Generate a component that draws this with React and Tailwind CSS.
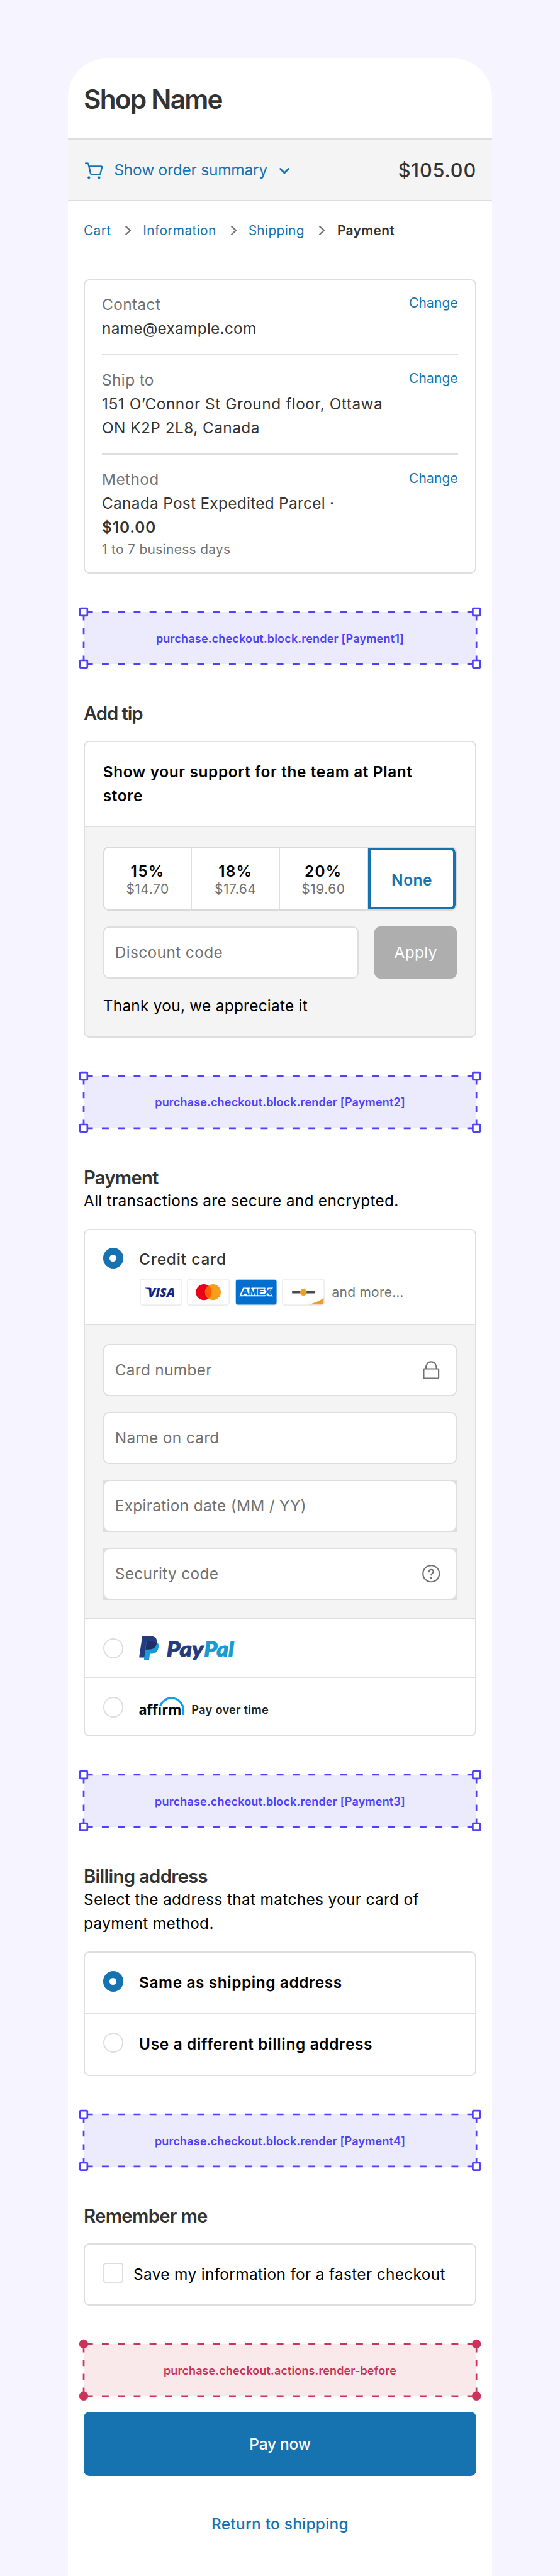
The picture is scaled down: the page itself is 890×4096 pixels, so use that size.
import React from "react";

const cx = (...names) => names.filter(Boolean).join(" ");

/* ---------- shared pieces ---------- */

function Body({ className, children }) {
  return <p className={cx("text-[24.4px] leading-[38px] whitespace-nowrap", className)}>{children}</p>;
}

function Heading({ className, children }) {
  return (
    <h2 className={cx("text-[29.3px] leading-[34px] font-semibold text-[#333] whitespace-nowrap", className)}>
      {children}
    </h2>
  );
}

function Card({ className, children }) {
  return (
    <div className={cx("overflow-hidden rounded-[9px] border-2 border-[#dedede] bg-white", className)}>
      {children}
    </div>
  );
}

function Radio({ checked, className }) {
  return checked ? (
    <span className={cx("flex size-[32.4px] shrink-0 items-center justify-center rounded-full bg-[#1773b0]", className)}>
      <span className="size-[10.8px] rounded-full bg-white" />
    </span>
  ) : (
    <span className={cx("size-[32.4px] shrink-0 rounded-full border-2 border-[#dedede] bg-white", className)} />
  );
}

function ExtensionTarget({ label, tone = "block", className, tracking }) {
  const red = tone === "action";
  const color = red ? "#cc3359" : "#4f40fa";
  const corners = [
    [8, 8],
    [632.2, 8],
    [8, 90.8],
    [632.2, 90.8],
  ];
  return (
    <div
      className={cx(
        "relative flex h-[82.8px] items-center justify-center text-[18px] font-semibold whitespace-nowrap",
        red ? "bg-[#fae9eb] text-[#cc3359]" : "bg-[#ecebfe] text-[#4f40fa]",
        className
      )}
    >
      <svg
        className="absolute -top-[8px] -left-[8px] h-[98.8px] w-[640.2px]"
        viewBox="0 0 640.2 98.8"
        fill="none"
        stroke={color}
        strokeWidth="2.7"
      >
        <g strokeDasharray="10.9 14.35">
          <path d="M11.7 8H629" />
          <path d="M11.7 90.8H629" />
        </g>
        <g strokeDasharray="9.4 12.4">
          <path d="M8 12V87" />
          <path d="M632.2 12V87" />
        </g>
        {corners.map(([x, y]) =>
          red ? (
            <circle key={`${x}-${y}`} cx={x} cy={y} r="7.2" fill={color} stroke="none" />
          ) : (
            <rect key={`${x}-${y}`} x={x - 5.8} y={y - 5.8} width="11.6" height="11.6" rx="0.8" fill="#fff" />
          )
        )}
      </svg>
      <span className={cx("pt-[2px]", tracking)}>{label}</span>
    </div>
  );
}

/* ---------- icons ---------- */

function CartIcon() {
  return (
    <svg className="mt-[2px] ml-[2px] h-[26.4px] w-[28.4px]" viewBox="45 90 142 132" fill="none">
      <path
        d="M51 97.500H64Q70 97.500 72 105L77 122L90 179Q92 187 99 187H159Q166 187 168 180L180 130Q181 122 174 122H78"
        stroke="#1773b0"
        strokeWidth="12"
        strokeLinecap="round"
        strokeLinejoin="round"
      />
      <circle cx="76.500" cy="211" r="10" fill="#1773b0" />
      <circle cx="157" cy="211" r="10" fill="#1773b0" />
    </svg>
  );
}

function CrumbChevron({ className }) {
  return (
    <svg className={cx("mr-[18.500px] ml-[23px] h-[14.800px] w-[9.500px]", className)} viewBox="0 0 9.5 14.8" fill="none">
      <path d="M1.300 1.300L8 7.400L1.300 13.500" stroke="#717171" strokeWidth="2.300" strokeLinecap="round" strokeLinejoin="round" />
    </svg>
  );
}

function LockIcon() {
  return (
    <svg className="size-[28.500px]" viewBox="0 0 28.5 28.5" fill="none" stroke="#717171" strokeWidth="2.200">
      <rect x="2.400" y="12.500" width="23.700" height="15" rx="1" />
      <path d="M5.700 12.500C5.700 5.600 9 1.300 14.250 1.300S22.800 5.600 22.800 12.500" />
    </svg>
  );
}

function HelpIcon() {
  return (
    <svg className="size-[28.500px]" viewBox="0 0 28.5 28.5" fill="none" stroke="#717171" strokeWidth="2.200">
      <circle cx="14.250" cy="14.250" r="13" />
      <path d="M10.800 11.200C10.800 9.100 12.200 7.800 14.300 7.800S17.800 9.100 17.800 11C17.800 13.500 14.300 13.600 14.300 16.300" strokeLinecap="round" />
      <circle cx="14.250" cy="20.700" r="1.700" fill="#717171" stroke="none" />
    </svg>
  );
}

function BrandCard({ children }) {
  return (
    <svg className="h-[43.100px] w-[68.200px]" viewBox="0 0 341 215">
      <rect x="4.500" y="4.500" width="332" height="206" rx="22" fill="#fff" stroke="#ededed" strokeWidth="9" />
      {children}
    </svg>
  );
}

function VisaMark() {
  return (
    <BrandCard>
      <path d="M45 72H82L92 110Q80 82 45 76Z" fill="#142688" />
      <text x="66" y="144" fontFamily="Open Sans" fontWeight="800" fontStyle="italic" fontSize="101" fill="#142688" textLength="214" lengthAdjust="spacingAndGlyphs">
        VISA
      </text>
    </BrandCard>
  );
}

function MastercardMark() {
  return (
    <BrandCard>
      <circle cx="135" cy="108" r="63" fill="#eb001b" />
      <circle cx="207" cy="108" r="63" fill="#f79e1b" />
      <path d="M171 56.300A63 63 0 0 1 171 159.700A63 63 0 0 1 171 56.300Z" fill="#ff5f00" />
    </BrandCard>
  );
}

function AmexMark() {
  return (
    <BrandCard>
      <rect x="9" y="9" width="324" height="198" rx="17" fill="#006fcf" />
      <path
        d="M66 72H121L127 86L133 72H242L253 83L264 72H306L273 105L306 141H265L253 130L242 141H82L77 132L73 141H36Z"
        fill="#fff"
      />
      <text x="53" y="130" fontFamily="Liberation Sans" fontWeight="700" fontSize="71" fill="#006fcf" stroke="#006fcf" strokeWidth="3" textLength="236" lengthAdjust="spacingAndGlyphs">
        AMEX
      </text>
    </BrandCard>
  );
}

function DiscoverMark() {
  return (
    <BrandCard>
      <path d="M81 108H261" stroke="#4a4a4a" strokeWidth="18" />
      <circle cx="171" cy="108" r="27" fill="#ee9f27" />
      <path d="M212 206Q285 190 332 152V189Q332 206 315 206Z" fill="#ee9f27" />
    </BrandCard>
  );
}

function PayPalLogo() {
  return (
    <svg className="h-[39.200px] w-[151.400px] overflow-visible" viewBox="41 56 757 196" role="img" aria-label="PayPal">
      <path d="M66 63Q67 58 72 58H135Q183 60 183 100Q180 160 118 165L90 229H46Q41 229 42 224Z" fill="#253b80" />
      <path d="M104 101H150Q176 101 186 110Q199 121 197 143Q190 197 140 198H132Q127 198 126 203L121 246Q120 251 116 251H83Q80 251 80 247L99 107Q100 101 104 101Z" fill="#179bd7" />
      <path d="M105 101H150Q172 101 182 107Q178 164 118 165H98Q94 165 92 169L100 106Q100 101 105 101Z" fill="#222d65" />
      <g fontFamily="Lato" fontWeight="900" fontStyle="italic" fontSize="166" strokeWidth="5">
        <text x="260" y="221" fill="#253b80" stroke="#253b80" textLength="293" lengthAdjust="spacingAndGlyphs">
          Pay
        </text>
        <text x="557" y="221" fill="#179bd7" stroke="#179bd7" textLength="238" lengthAdjust="spacingAndGlyphs">
          Pal
        </text>
      </g>
    </svg>
  );
}

function AffirmLogo() {
  return (
    <svg className="h-[29.600px] w-[72.600px] overflow-visible" viewBox="41 539 363 148" role="img" aria-label="affirm">
      <text x="38" y="684" fontFamily="Open Sans" fontWeight="700" fontSize="113" fill="#060809" textLength="341" lengthAdjust="spacingAndGlyphs">
        affırm
      </text>
      <path d="M209 612C225 572 260 548 298 548C352 548 394 594 394 650Q394 668 391 684" fill="none" stroke="#0fa0ea" strokeWidth="16" />
    </svg>
  );
}

/* ---------- sections ---------- */

function ReviewRow({ label, last, children }) {
  return (
    <div className={cx("flex items-start justify-between pt-[20px]", !last && "border-b-2 border-[#dedede] pb-[22.400px]")}>
      <div>
        <Body className="tracking-[0.016em] text-[#717171]">{label}</Body>
        {children}
      </div>
      <a className="pt-[2.200px] text-[20.900px] leading-[30px] tracking-[0.011em] text-[#1773b0]">Change</a>
    </div>
  );
}

function Review() {
  return (
    <Card className="mt-[62.500px] h-[467.600px] px-[27px] text-[#333]">
      <div className="-mt-[1.600px]">
        <ReviewRow label="Contact">
          <Body className="tracking-[0.011em]">name@example.com</Body>
        </ReviewRow>
        <ReviewRow label="Ship to">
          <Body className="tracking-[0.022em]">151 O’Connor St Ground floor, Ottawa</Body>
          <Body className="tracking-[0.018em]">ON K2P 2L8, Canada</Body>
        </ReviewRow>
        <ReviewRow label="Method" last>
          <Body className="tracking-[0.012em]">Canada Post Expedited Parcel ·</Body>
          <Body className="font-semibold tracking-[0.037em]">$10.00</Body>
          <p className="mt-[1.400px] text-[20.900px] leading-[30px] tracking-[0.016em] text-[#717171]">1 to 7 business days</p>
        </ReviewRow>
      </div>
    </Card>
  );
}

const tips = [
  ["15%", "$14.70"],
  ["18%", "$17.64"],
  ["20%", "$19.60"],
];

function Tip() {
  return (
    <Card className="mt-[26.200px] flex h-[471.200px] flex-col">
      <div className="h-[134.800px] shrink-0 border-b-2 border-[#dedede] px-[28.700px] pt-[27.300px]">
        <Body className="font-semibold tracking-[0.026em] text-black">Show your support for the team at Plant</Body>
        <Body className="font-semibold tracking-[0.026em] text-black">store</Body>
      </div>
      <div className="grow bg-[#f4f4f4] px-[28.700px] pt-[30.600px]">
        <div className="grid h-[101.900px] grid-cols-4 overflow-hidden rounded-[9px] border-2 border-[#dadada] bg-white text-center">
          {tips.map(([percent, amount]) => (
            <div key={percent} className="border-r-2 border-[#dedede] pt-[21px]">
              <p className="text-[24.400px] leading-[32px] font-semibold tracking-[0.050em] text-black">{percent}</p>
              <p className="text-[20.900px] leading-[26px] tracking-[0.025em] text-[#717171]">{amount}</p>
            </div>
          ))}
          <div className="flex items-center justify-center rounded-r-[7px] border-4 border-[#1773b0] pt-[6px] text-[24.400px] font-semibold tracking-[0.021em] text-[#1773b0]">
            None
          </div>
        </div>
        <div className="mt-[25.400px] flex h-[82.800px] gap-[25px]">
          <div className="flex grow items-center rounded-[9px] border-2 border-[#dedede] bg-white pl-[17px]">
            <Body className="tracking-[0.016em] text-[#717171]">Discount code</Body>
          </div>
          <div className="flex w-[131.300px] items-center justify-center rounded-[9px] bg-[#aeaeae]">
            <Body className="tracking-[0.016em] text-white">Apply</Body>
          </div>
        </div>
        <Body className="mt-[24.400px] tracking-[0.011em] text-black">Thank you, we appreciate it</Body>
      </div>
    </Card>
  );
}

function Field({ label, icon, square }) {
  const content = (
    <>
      <Body className="tracking-[0.013em] text-[#717171]">{label}</Body>
      {icon}
    </>
  );
  if (square) {
    return (
      <div className="h-[83px] bg-[#dedede] p-[2px]">
        <div className="flex h-full items-center justify-between rounded-[8px] bg-white pr-[25px] pl-[17px]">{content}</div>
      </div>
    );
  }
  return (
    <div className="flex h-[83px] items-center justify-between rounded-[9px] border-2 border-[#dedede] bg-white pr-[25px] pl-[17px]">
      {content}
    </div>
  );
}

function PaymentMethods() {
  return (
    <Card className="mt-[26.100px] h-[807.700px]">
      <div className="flex h-[151px] gap-[25px] border-b-2 border-[#dedede] px-[28.700px] pt-[27.500px]">
        <Radio checked className="mt-px" />
        <div>
          <Body className="font-medium tracking-[0.035em] text-[#333]">Credit card</Body>
          <div className="mt-[11.500px] ml-[0.500px] flex items-center gap-[7.300px]">
            <VisaMark />
            <MastercardMark />
            <AmexMark />
            <DiscoverMark />
            <span className="ml-[4px] text-[20.900px] tracking-[0.015em] whitespace-nowrap text-[#717171]">and more…</span>
          </div>
        </div>
      </div>
      <div className="flex h-[467.500px] flex-col gap-[25px] border-b-2 border-[#dedede] bg-[#f4f4f4] px-[28.700px] pt-[30.200px]">
        <Field label="Card number" icon={<LockIcon />} />
        <Field label="Name on card" />
        <Field label="Expiration date (MM / YY)" square />
        <Field label="Security code" square icon={<HelpIcon />} />
      </div>
      <div className="flex h-[93.500px] items-center gap-[25px] border-b-2 border-[#dedede] px-[28.700px] pt-[2px]">
        <Radio />
        <PayPalLogo />
      </div>
      <div className="flex h-[91.900px] items-center px-[28.700px] pt-[2px]">
        <Radio />
        <div className="mb-[3px] ml-[25px] flex items-end">
          <AffirmLogo />
          <span className="ml-[10.500px] text-[18.300px] leading-[19px] font-semibold tracking-[0.014em] whitespace-nowrap text-[#202223]">Pay over time</span>
        </div>
      </div>
    </Card>
  );
}

export default function App() {
  return (
    <div className="h-[4096px] w-[890px] overflow-hidden bg-[#f6f4ff] pt-[93.400px] font-[Inter,sans-serif]">
      <main className="ml-[108px] h-[4002.600px] w-[674px] overflow-hidden rounded-t-[61px] bg-white">
        <header className="h-[126.200px] px-[25px] pt-[40px]">
          <h1 className="text-[42.300px] leading-[50px] font-semibold tracking-[-0.042em] text-[#333]">Shop Name</h1>
        </header>

        <div className="flex h-[100.700px] items-center justify-between border-y-2 border-[#dedede] bg-[#f4f4f4] px-[25px]">
          <div className="flex items-center text-[#1773b0]">
            <CartIcon />
            <Body className="ml-[18px] tracking-[-0.007em]">Show order summary</Body>
            <svg className="mt-[4px] ml-[18.500px] h-[9.800px] w-[16px]" viewBox="0 0 16 9.8" fill="none">
              <path d="M1.600 1.600L8 7.900L14.400 1.600" stroke="#1773b0" strokeWidth="2.800" strokeLinecap="round" strokeLinejoin="round" />
            </svg>
          </div>
          <span className="pt-[2px] text-[30.600px] font-medium tracking-[0.028em] text-[#333]">$105.00</span>
        </div>

        <div className="px-[25px]">
          <nav className="flex items-center pt-[31.400px] text-[20.900px] leading-[30px] tracking-[0.016em] text-[#1773b0]">
            <a>Cart</a>
            <CrumbChevron />
            <a>Information</a>
            <CrumbChevron />
            <a>Shipping</a>
            <CrumbChevron className="mr-[19.500px]" />
            <span className="font-semibold tracking-[0.018em] text-[#333]">Payment</span>
          </nav>

          <Review />
          <ExtensionTarget className="mt-[61.400px]" label="purchase.checkout.block.render [Payment1]" tracking="tracking-[0.010em]" />

          <Heading className="mt-[62.300px] tracking-[-0.037em]">Add tip</Heading>
          <Tip />
          <ExtensionTarget className="mt-[60.900px]" label="purchase.checkout.block.render [Payment2]" tracking="tracking-[0.010em]" />

          <Heading className="mt-[62.300px] tracking-[-0.027em]">Payment</Heading>
          <Body className="tracking-[0.013em] text-black">All transactions are secure and encrypted.</Body>
          <PaymentMethods />
          <ExtensionTarget className="mt-[60.900px]" label="purchase.checkout.block.render [Payment3]" tracking="tracking-[0.010em]" />

          <Heading className="mt-[62.100px] tracking-[-0.024em]">Billing address</Heading>
          <Body className="tracking-[0.014em] text-black">Select the address that matches your card of</Body>
          <Body className="tracking-[0.014em] text-black">payment method.</Body>
          <Card className="mt-[25.800px] h-[197.600px]">
            <div className="flex h-[97px] items-center gap-[25px] border-b-2 border-[#dedede] px-[28.700px]">
              <Radio checked className="-mt-[4px]" />
              <Body className="font-semibold tracking-[0.024em] text-black">Same as shipping address</Body>
            </div>
            <div className="flex h-[96.600px] items-center gap-[25px] px-[28.700px]">
              <Radio className="-mt-[4px]" />
              <Body className="font-semibold tracking-[0.027em] text-black">Use a different billing address</Body>
            </div>
          </Card>
          <ExtensionTarget className="mt-[61.200px]" label="purchase.checkout.block.render [Payment4]" tracking="tracking-[0.010em]" />

          <Heading className="mt-[62.500px] tracking-[-0.024em]">Remember me</Heading>
          <Card className="mt-[25.900px] flex h-[98.800px] items-center gap-[16px] px-[28.700px]">
            <span className="-mt-[5px] size-[32.400px] shrink-0 rounded-[4px] border-2 border-[#dedede]" />
            <Body className="tracking-[0.014em] text-black">Save my information for a faster checkout</Body>
          </Card>
          <ExtensionTarget
            className="mt-[61.100px]"
            tone="action"
            label="purchase.checkout.actions.render-before"
            tracking="tracking-[0.007em]"
          />

          <button className="mt-[25.300px] flex h-[102.500px] w-full items-center justify-center rounded-[9px] bg-[#1773b0]">
            <Body className="font-medium tracking-[-0.008em] text-white">Pay now</Body>
          </button>
          <Body className="mt-[56.900px] text-center font-medium tracking-[0.011em] text-[#1773b0]">Return to shipping</Body>
        </div>
      </main>
    </div>
  );
}
